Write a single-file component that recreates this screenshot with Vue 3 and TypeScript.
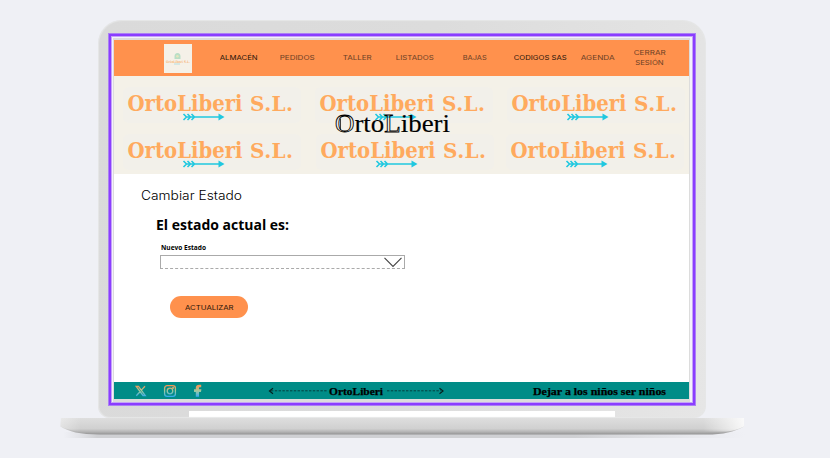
<script setup lang="ts">
interface NavItem {
  label: string
  width: number
  gap: number
  strong?: boolean
}

const navItems: NavItem[] = [
  { label: 'ALMACÉN', width: 38, gap: 28, strong: true },
  { label: 'PEDIDOS', width: 35, gap: 22 },
  { label: 'TALLER', width: 29, gap: 28 },
  { label: 'LISTADOS', width: 38, gap: 24 },
  { label: 'BAJAS', width: 24, gap: 29 },
  { label: 'CODIGOS SAS', width: 53, gap: 27, strong: true },
  { label: 'AGENDA', width: 34, gap: 14 },
]

const logos: { id: number; x: number; y: number }[] = [
  { id: 1, x: 14, y: 34 },
  { id: 2, x: 206, y: 34 },
  { id: 3, x: 398, y: 34 },
  { id: 4, x: 14, y: 81 },
  { id: 5, x: 207, y: 81 },
  { id: 6, x: 397, y: 81 },
]
</script>

<template>
  <main class="stage">
    <div class="lid">
      <div class="frame">
        <div class="screen">
          <header class="nav">
            <svg class="brand" width="28" height="29" viewBox="0 0 28 29">
              <rect width="28" height="29" fill="#f5f1e8" />
              <path d="M10.500 15v-2.500a3 3.600 0 0 1 6 0V15z" fill="#b9dfc6" />
              <circle cx="13.400" cy="12.300" r="1.300" fill="#e5e6bd" />
              <text x="2" y="18.800" textLength="24" lengthAdjust="spacingAndGlyphs" class="brand-text">OrtoLiberi S.L.</text>
              <path d="M10 20h6" stroke="#a5dbe0" stroke-width=".8" />
            </svg>
            <nav class="links">
              <a
                v-for="item in navItems"
                :key="item.label"
                :class="{ strong: item.strong }"
                :style="{ marginLeft: item.gap + 'px' }"
              >
                <svg :width="item.width" height="10">
                  <text x="-0.300" y="7" :textLength="item.width" lengthAdjust="spacingAndGlyphs">{{ item.label }}</text>
                </svg>
              </a>
              <a class="logout">
                <svg width="32" height="20">
                  <text x="-0.300" y="7" textLength="32" lengthAdjust="spacingAndGlyphs">CERRAR</text>
                  <text x="1.200" y="17" textLength="28.500" lengthAdjust="spacingAndGlyphs">SESIÓN</text>
                </svg>
              </a>
            </nav>
          </header>

          <svg class="banner" width="575" height="98" viewBox="0 0 575 98">
            <rect width="575" height="98" fill="#f4f1e8" />
            <g v-for="logo in logos" :key="logo.id" :transform="`translate(${logo.x} ${logo.y})`">
              <rect x="-5" y="-23" width="178" height="36" rx="6" fill="#f2f0ea" />
              <text y="0.500" class="logo-text">
                <tspan x="-0.500" textLength="115" lengthAdjust="spacingAndGlyphs">OrtoLiberi</tspan>
                <tspan x="122" textLength="43" lengthAdjust="spacing">S.L.</tspan>
              </text>
              <path
                d="M55.500 4l3 3-3 3M59.500 4l3 3-3 3M63.500 4l3 3-3 3M58 7h34"
                fill="none"
                stroke="#20c8e0"
                stroke-width="1.600"
              />
              <path d="M90.500 3.500L96.500 7l-6 3.500z" fill="#20c8e0" />
            </g>
            <text x="221" y="56" textLength="115" lengthAdjust="spacingAndGlyphs" class="title-text"><tspan class="outline">O</tspan>rto<tspan class="outline">L</tspan>iberi</text>
            <path d="M226.500 42.500v11.500" stroke="#111" stroke-width=".8" />
          </svg>

          <section class="content">
            <h1>
              <svg width="104" height="20"><text x="0" y="15" textLength="101" lengthAdjust="spacingAndGlyphs">Cambiar Estado</text></svg>
            </h1>
            <h2>
              <svg width="136" height="22"><text x="0" y="16" textLength="133" lengthAdjust="spacingAndGlyphs">El estado actual es:</text></svg>
            </h2>
            <label>
              <svg width="48" height="12"><text x="0" y="9" textLength="45" lengthAdjust="spacingAndGlyphs">Nuevo Estado</text></svg>
            </label>
            <div class="select">
              <svg width="18" height="11"><path d="M.5.800L9 9.500 17.500.800" fill="none" stroke="#444" stroke-width="1.100" /></svg>
            </div>
            <button type="button">
              <svg width="49" height="10"><text x="0" y="7.500" textLength="48.500" lengthAdjust="spacingAndGlyphs">ACTUALIZAR</text></svg>
            </button>
          </section>

          <footer class="footer">
            <svg width="575" height="17" viewBox="0 0 575 17">
              <defs>
                <linearGradient id="social" x1="0" y1="3" x2="0" y2="15" gradientUnits="userSpaceOnUse">
                  <stop offset="0" stop-color="#ff914d" />
                  <stop offset=".5" stop-color="#9bcaa0" />
                  <stop offset="1" stop-color="#2da8f5" />
                </linearGradient>
              </defs>
              <g fill="none" stroke="url(#social)" stroke-width="1.300">
                <path d="M22.200 4.300h2.300l6.800 9.200H29zM31 4.200l-3.900 4.200M26 9.700l-3.700 4" />
                <rect x="50.600" y="3.600" width="10.800" height="10.800" rx="2.600" />
                <circle cx="56" cy="9" r="2.800" />
                <circle cx="59.100" cy="5.900" r=".4" />
              </g>
              <path
                d="M81.800 14.800V10H80V7.300h1.800V5.800c0-2 1.300-3 3.400-3h2v2.400h-1.100c-.9 0-1.100.3-1.100 1v1.100h2.400L87 10h-2v4.800z"
                fill="url(#social)"
              />
              <g fill="none" stroke="#05201f">
                <path d="M159 6.300L155.500 9l3.500 2.700M325.500 6.300L329 9l-3.500 2.700" stroke-width="1.200" />
                <path d="M157 8.800h56M273 8.800h54" stroke-width=".7" stroke-dasharray="2.400 1.400" />
              </g>
              <text x="215" y="12.500" textLength="54" lengthAdjust="spacingAndGlyphs" class="foot-text">OrtoLiberi</text>
              <text x="419" y="12.500" textLength="133" lengthAdjust="spacingAndGlyphs" class="foot-text">Dejar a los niños ser niños</text>
            </svg>
          </footer>
        </div>
      </div>
    </div>
    <svg class="base" width="690" height="24" viewBox="0 0 690 24">
      <defs>
        <linearGradient id="deck" x1="0" y1="0" x2="0" y2="1">
          <stop offset="0" stop-color="#dedede" />
          <stop offset=".65" stop-color="#d0d0d0" />
          <stop offset=".85" stop-color="#b2b2b2" />
          <stop offset="1" stop-color="#929292" />
        </linearGradient>
        <linearGradient id="shine" x1="0" y1="0" x2="1" y2="0">
          <stop offset="0" stop-color="#fff" stop-opacity=".35" />
          <stop offset=".03" stop-color="#fff" stop-opacity="0" />
          <stop offset=".94" stop-color="#fff" stop-opacity="0" />
          <stop offset="1" stop-color="#fff" stop-opacity=".85" />
        </linearGradient>
        <linearGradient id="shadow" x1="0" y1="0" x2="1" y2="0">
          <stop offset="0" stop-color="#d9dade" stop-opacity="0" />
          <stop offset=".05" stop-color="#cfd0d3" />
          <stop offset=".75" stop-color="#cfd0d3" />
          <stop offset="1" stop-color="#d9dade" stop-opacity="0" />
        </linearGradient>
      </defs>
      <rect x="3" y="14" width="682" height="6" fill="url(#shadow)" />
      <path d="M1 0H684V8.500C674 14 664 16.500 646 16.500H40C20 16.500 8 13.500.500 8.500z" fill="url(#deck)" />
      <path d="M1 0H684V8.500C678 11.500 672 13 666 13.500H20C12 12.500 6 11 .500 8.500z" fill="url(#shine)" />
    </svg>
  </main>
</template>

<style>
body {
  margin: 0;
  background: #eff0f5;
}
</style>

<style scoped>
.stage {
  width: 830px;
  height: 458px;
  box-sizing: border-box;
  padding: 20px 0 0 60px;
  overflow: hidden;
  background: #eff0f5;
  font-family: Inter, "Open Sans", sans-serif;
}
svg {
  display: block;
  flex: none;
}
.lid {
  width: 608px;
  height: 398px;
  margin-left: 38px;
  box-sizing: border-box;
  padding: 13px 10px 0;
  border-radius: 24px 24px 12px 12px;
  background:
    linear-gradient(#fff, #fff) 91px 391px / 426px 7px no-repeat,
    linear-gradient(100deg, #dadada, #dcdcdc 50%, #e6e6e6);
  box-shadow: inset 0 0 1px 1px #e6e7e7;
}
.frame {
  width: 588px;
  height: 373px;
  box-sizing: border-box;
  border: 3px solid #8b3dff;
  outline: 1px solid #ab80f5;
  outline-offset: -1px;
  box-shadow: inset 0 0 0 1px #c4a3f8;
  padding: 2px;
  background: #f4f0fb;
}
.screen {
  width: 577px;
  height: 364px;
  box-sizing: border-box;
  border: 1px solid #dcdcdc;
  border-top-width: 2px;
  border-bottom-width: 3px;
  background: #fff;
  display: flex;
  flex-direction: column;
}
.nav {
  display: flex;
  align-items: center;
  height: 36px;
  padding-left: 50px;
  background: #ff914d;
}
.links {
  display: flex;
  align-items: center;
}
.links a {
  display: block;
}
.links text {
  font-size: 6.700px;
  fill: #6b3f25;
}
.links .strong text {
  fill: #26140a;
}
.links .logout {
  margin-left: 19px;
}
.brand-text {
  font: 700 3.600px "DejaVu Serif", serif;
  fill: #f7b77f;
}
.logo-text {
  font: 700 21.500px "DejaVu Serif", serif;
  fill: #ffaa5e;
}
.logo-text tspan:last-child {
  font-size: 20px;
}
.title-text {
  font: 24.500px "Liberation Serif", serif;
  fill: #000;
  stroke: #000;
  stroke-width: .15px;
}
.outline {
  fill: none;
  stroke: #000;
  stroke-width: .8px;
}
.content {
  display: flex;
  flex-direction: column;
  align-items: flex-start;
  height: 208px;
  box-sizing: border-box;
  padding: 11px 0 0 27px;
}
h1,
h2 {
  margin: 0;
}
h1 text {
  font-size: 12.800px;
  font-weight: 300;
  fill: #000;
}
h2 {
  margin: 9px 0 0 15px;
}
h2 text {
  font: 700 14.500px "Open Sans", sans-serif;
}
label {
  margin: 5px 0 0 20px;
}
label text {
  font: 700 7px "Open Sans", sans-serif;
}
.select {
  display: flex;
  justify-content: flex-end;
  align-items: center;
  width: 245px;
  height: 14px;
  box-sizing: border-box;
  margin: 2px 0 0 19px;
  padding-right: 2px;
  border: 1px solid #aaa;
  border-bottom-style: dashed;
}
button {
  display: flex;
  align-items: center;
  justify-content: center;
  width: 78px;
  height: 22px;
  margin: 27px 0 0 29px;
  padding: 0;
  border: 0;
  border-radius: 11px;
  background: #ff914d;
}
button text {
  font: 6.700px Inter, sans-serif;
  fill: #26140a;
}
.footer {
  height: 17px;
  background: #008c87;
}
.foot-text {
  font: 700 11px "Liberation Serif", serif;
  fill: #000;
  stroke: #000;
  stroke-width: .25px;
}
</style>
